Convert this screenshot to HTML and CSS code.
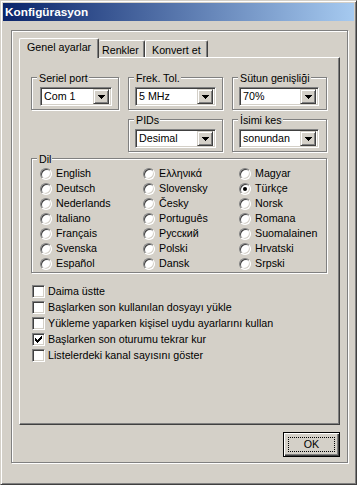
FILE: index.html
```html
<!DOCTYPE html>
<html>
<head>
<meta charset="utf-8">
<link rel="stylesheet" href="styles.css">
</head>
<body>
<div class="window">
  <div class="titlebar"><span class="title">Konfigürasyon</span></div>
  <div class="frame">
    <div class="tabs">
      <div class="tab active">Genel ayarlar</div>
      <div class="tab t-renk">Renkler</div>
      <div class="tab t-konv">Konvert et</div>
    </div>
    <div class="panel">
      <div class="row row1">
        <div class="group g-seriel">
          <span class="legend">Seriel port</span>
          <div class="combo c-seriel"><span class="val">Com 1</span><span class="ddbtn"><svg width="7" height="4" viewBox="0 0 7 4" shape-rendering="crispEdges"><rect x="0" y="0" width="7" height="1"/><rect x="1" y="1" width="5" height="1"/><rect x="2" y="2" width="3" height="1"/><rect x="3" y="3" width="1" height="1"/></svg></span></div>
        </div>
        <div class="group g-frek">
          <span class="legend">Frek. Tol.</span>
          <div class="combo c-frek"><span class="val">5 MHz</span><span class="ddbtn"><svg width="7" height="4" viewBox="0 0 7 4" shape-rendering="crispEdges"><rect x="0" y="0" width="7" height="1"/><rect x="1" y="1" width="5" height="1"/><rect x="2" y="2" width="3" height="1"/><rect x="3" y="3" width="1" height="1"/></svg></span></div>
        </div>
        <div class="group g-sutun">
          <span class="legend">Sütun genişliği</span>
          <div class="combo c-sutun"><span class="val">70%</span><span class="ddbtn"><svg width="7" height="4" viewBox="0 0 7 4" shape-rendering="crispEdges"><rect x="0" y="0" width="7" height="1"/><rect x="1" y="1" width="5" height="1"/><rect x="2" y="2" width="3" height="1"/><rect x="3" y="3" width="1" height="1"/></svg></span></div>
        </div>
      </div>
      <div class="row row2">
        <div class="group g-frek">
          <span class="legend">PIDs</span>
          <div class="combo c-frek"><span class="val">Desimal</span><span class="ddbtn"><svg width="7" height="4" viewBox="0 0 7 4" shape-rendering="crispEdges"><rect x="0" y="0" width="7" height="1"/><rect x="1" y="1" width="5" height="1"/><rect x="2" y="2" width="3" height="1"/><rect x="3" y="3" width="1" height="1"/></svg></span></div>
        </div>
        <div class="group g-sutun">
          <span class="legend">İsimi kes</span>
          <div class="combo c-sutun"><span class="val">sonundan</span><span class="ddbtn"><svg width="7" height="4" viewBox="0 0 7 4" shape-rendering="crispEdges"><rect x="0" y="0" width="7" height="1"/><rect x="1" y="1" width="5" height="1"/><rect x="2" y="2" width="3" height="1"/><rect x="3" y="3" width="1" height="1"/></svg></span></div>
        </div>
      </div>
      <div class="group g-dil">
        <span class="legend">Dil</span>
        <div class="radios">
          <div class="opt"><span class="radio"></span>English</div>
          <div class="opt"><span class="radio"></span>Ελληνικά</div>
          <div class="opt"><span class="radio"></span>Magyar</div>
          <div class="opt"><span class="radio"></span>Deutsch</div>
          <div class="opt"><span class="radio"></span>Slovensky</div>
          <div class="opt"><span class="radio checked"></span>Türkçe</div>
          <div class="opt"><span class="radio"></span>Nederlands</div>
          <div class="opt"><span class="radio"></span>Česky</div>
          <div class="opt"><span class="radio"></span>Norsk</div>
          <div class="opt"><span class="radio"></span>Italiano</div>
          <div class="opt"><span class="radio"></span>Português</div>
          <div class="opt"><span class="radio"></span>Romana</div>
          <div class="opt"><span class="radio"></span>Français</div>
          <div class="opt"><span class="radio"></span>Русский</div>
          <div class="opt"><span class="radio"></span>Suomalainen</div>
          <div class="opt"><span class="radio"></span>Svenska</div>
          <div class="opt"><span class="radio"></span>Polski</div>
          <div class="opt"><span class="radio"></span>Hrvatski</div>
          <div class="opt"><span class="radio"></span>Español</div>
          <div class="opt"><span class="radio"></span>Dansk</div>
          <div class="opt"><span class="radio"></span>Srpski</div>
        </div>
      </div>
      <div class="checks">
        <div class="chk"><span class="box"></span>Daima üstte</div>
        <div class="chk"><span class="box"></span>Başlarken son kullanılan dosyayı yükle</div>
        <div class="chk"><span class="box"></span>Yükleme yaparken kişisel uydu ayarlarını kullan</div>
        <div class="chk"><span class="box"><svg width="7" height="7" viewBox="0 0 7 7" shape-rendering="crispEdges"><rect x="0" y="2" width="1" height="3"/><rect x="1" y="3" width="1" height="3"/><rect x="2" y="4" width="1" height="3"/><rect x="3" y="3" width="1" height="3"/><rect x="4" y="2" width="1" height="3"/><rect x="5" y="1" width="1" height="3"/><rect x="6" y="0" width="1" height="3"/></svg></span>Başlarken son oturumu tekrar kur</div>
        <div class="chk"><span class="box"></span>Listelerdeki kanal sayısını göster</div>
      </div>
    </div>
    <div class="footer">
      <div class="okbtn"><span class="focus">OK</span></div>
    </div>
  </div>
</div>
</body>
</html>
```

FILE: styles.css
```css
* { box-sizing: border-box; }
html, body { margin: 0; padding: 0; background: #D4D0C8; }
body {
  font-family: "Liberation Sans", Arial, sans-serif;
  font-size: 10.7px;
  color: #000;
}
.window {
  width: 357px;
  height: 485px;
  background: #D4D0C8;
  border-top: 1px solid #D4D0C8;
  border-left: 1px solid #D4D0C8;
  border-right: 1px solid #404040;
  border-bottom: 1px solid #404040;
  box-shadow: inset 1px 1px 0 #fff, inset -1px -1px 0 #808080;
  padding: 2px;
}
.titlebar {
  height: 18px;
  background: linear-gradient(to right, #0A246A, #A6CAF0);
  display: flex;
  align-items: center;
  padding-left: 2px;
}
.title {
  color: #fff;
  font-weight: bold;
  font-size: 11.8px;
  line-height: 18px;
}
.frame {
  margin: 9px 0 0 8px;
  width: 337px;
  height: 433px;
  border: 1px solid #808080;
  box-shadow: inset 1px 1px 0 #fff, 1px 1px 0 #fff;
  padding: 7px 7px 0 7px;
}
.tabs {
  display: flex;
  align-items: flex-end;
  height: 19px;
  position: relative;
  z-index: 2;
}
.tab {
  background: #D4D0C8;
  height: 17px;
  border-top: 1px solid #fff;
  border-left: 1px solid #fff;
  border-right: 1px solid #404040;
  box-shadow: inset -1px 0 0 #808080;
  border-top-left-radius: 2px;
  border-top-right-radius: 2px;
  line-height: 13px;
  padding-top: 3px;
  white-space: nowrap;
}
.tab.active {
  width: 80px;
  height: 20px;
  margin-bottom: -1px;
  padding-left: 7px;
  padding-top: 2px;
}
.t-renk { width: 46px; padding-left: 3px; border-left: none; }
.t-konv { padding-left: 6px; padding-right: 6px; }
.panel {
  width: 321px;
  height: 368px;
  border-top: 1px solid #fff;
  border-left: 1px solid #fff;
  border-right: 1px solid #404040;
  border-bottom: 1px solid #404040;
  box-shadow: inset -1px -1px 0 #808080;
  position: relative;
  z-index: 1;
}
.row { display: flex; gap: 9px; }
.row1 { margin-top: 19px; padding-left: 11px; }
.row2 { margin-top: 9px; padding-left: 108px; }
.group {
  display: flex;
  flex-direction: column;
  align-items: flex-start;
  border: 1px solid #808080;
  box-shadow: inset 1px 1px 0 #fff, 1px 1px 0 #fff;
  height: 33px;
}
.legend {
  margin-top: -6px;
  margin-left: 5px;
  padding: 0 1px 0 2px;
  background: #D4D0C8;
  line-height: 13px;
  white-space: nowrap;
}
.g-seriel { width: 88px; }
.g-frek { width: 95px; }
.g-sutun { width: 95px; }
.combo {
  margin-top: 2px;
  height: 19px;
  background: #fff;
  border: 1px solid;
  border-color: #808080 #fff #fff #808080;
  box-shadow: inset 1px 1px 0 #404040, inset -1px -1px 0 #D4D0C8;
  padding: 2px;
  display: flex;
  align-items: center;
  justify-content: space-between;
}
.c-seriel { margin-left: 8px; width: 72px; }
.c-frek { margin-left: 6px; width: 81px; }
.c-sutun { margin-left: 6px; width: 80px; }
.val { padding-left: 1px; line-height: 13px; }
.ddbtn {
  width: 16px;
  height: 15px;
  margin: -2px 0;
  background: #D4D0C8;
  border-top: 1px solid #D4D0C8;
  border-left: 1px solid #D4D0C8;
  border-right: 1px solid #404040;
  border-bottom: 1px solid #404040;
  box-shadow: inset 1px 1px 0 #fff, inset -1px -1px 0 #808080;
  display: flex;
  align-items: center;
  justify-content: center;
}
.ddbtn svg { fill: #000; display: block; margin-top: 1px; }
.g-dil {
  margin-top: 6px;
  margin-left: 11px;
  width: 296px;
  height: auto;
  padding-bottom: 1px;
}
.radios {
  display: grid;
  grid-template-columns: 103px 96px 1fr;
  grid-auto-rows: 15px;
  padding-left: 8px;
  width: 100%;
}
.opt {
  display: flex;
  align-items: center;
  white-space: nowrap;
  line-height: 13px;
}
.radio {
  width: 12px;
  height: 12px;
  border-radius: 50%;
  background: #fff;
  border: 1px solid;
  border-color: #808080 #fff #fff #808080;
  box-shadow: inset 1px 1px 0 #404040, inset -1px -1px 0 #D4D0C8;
  margin-right: 4px;
  position: relative;
  flex: none;
}
.radio.checked::after {
  content: "";
  position: absolute;
  left: 3px;
  top: 3px;
  width: 4px;
  height: 4px;
  border-radius: 50%;
  background: #000;
}
.checks {
  margin-top: 11px;
  padding-left: 12px;
}
.chk {
  height: 16px;
  display: flex;
  align-items: center;
  white-space: nowrap;
  line-height: 13px;
}
.chk:first-child { height: 15px; }
.box {
  width: 13px;
  height: 13px;
  background: #fff;
  border: 1px solid;
  border-color: #808080 #fff #fff #808080;
  box-shadow: inset 1px 1px 0 #404040, inset -1px -1px 0 #D4D0C8;
  margin-right: 3px;
  display: flex;
  align-items: center;
  justify-content: center;
  flex: none;
}
.box svg { fill: #000; display: block; }
.footer {
  display: flex;
  justify-content: flex-end;
  margin-top: 7px;
}
.okbtn {
  width: 57px;
  height: 25px;
  border: 1px solid #000;
  background: #D4D0C8;
  box-shadow: inset 1px 1px 0 #fff, inset -1px -1px 0 #404040, inset -2px -2px 0 #808080;
  padding: 4px;
  display: flex;
}
.focus {
  flex: 1;
  border: 1px dotted #000;
  display: flex;
  align-items: center;
  justify-content: center;
  line-height: 13px;
}
```
